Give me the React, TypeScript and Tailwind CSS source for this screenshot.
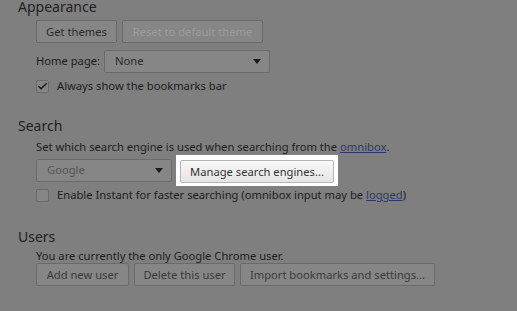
import { Check } from 'lucide-react';

const font = { fontFamily: '"Noto Sans", "Open Sans", sans-serif' };

function Btn({ children, disabled = false, className = '' }: { children: React.ReactNode; disabled?: boolean; className?: string }) {
  return (
    <button
      className={`h-[23px] px-[6px] whitespace-nowrap rounded-[2px] border border-[#6a6a6a] bg-[#868686] text-[11.2px] leading-none ${
        disabled ? 'text-[#9c9c9c]' : 'text-[#2b2b2b]'
      } ${className}`}
    >
      {children}
    </button>
  );
}

function Select({ value, className = '' }: { value: string; className?: string }) {
  return (
    <div
      className={`h-[23px] flex items-center justify-between pl-[10px] pr-[8px] rounded-[2px] border border-[#6a6a6a] bg-[#868686] text-[11.2px] text-[#2b2b2b] ${className}`}
    >
      <span>{value}</span>
      <span className="w-0 h-0 border-l-[4px] border-r-[4px] border-t-[5px] border-l-transparent border-r-transparent border-t-[#1c1c1c]" />
    </div>
  );
}

function Box({ checked = false }: { checked?: boolean }) {
  return (
    <span className="w-[13px] h-[13px] shrink-0 rounded-[2px] border border-[#6a6a6a] bg-[#868686] flex items-center justify-center">
      {checked && <Check size={11} strokeWidth={3.5} className="text-[#1c1c1c]" />}
    </span>
  );
}

export default function App() {
  return (
    <div style={font} className="w-[517px] h-[311px] overflow-hidden bg-[#7f7f7f] text-[#1d1d1d] pl-[18px]">
      {/* Appearance */}
      <h2 className="text-[14px] leading-[18px] -mt-[2px] text-[#222]">Appearance</h2>
      <div className="pl-[18px]">
        <div className="flex gap-[5px] mt-[4px]">
          <Btn className="w-[81px]">Get themes</Btn>
          <Btn disabled className="w-[141px]">Reset to default theme</Btn>
        </div>
        <div className="flex items-center gap-[4px] mt-[7px] text-[11.2px]">
          <span>Home page:</span>
          <Select value="None" className="w-[166px]" />
        </div>
        <label className="flex items-center gap-[8px] mt-[6px] text-[11.2px] leading-[14px]">
          <Box checked />
          <span>Always show the bookmarks bar</span>
        </label>
      </div>

      {/* Search */}
      <h2 className="text-[14px] leading-[18px] mt-[24px] text-[#222]">Search</h2>
      <div className="pl-[18px]">
        <p className="text-[11.2px] leading-[15px] mt-[4px]">
          Set which search engine is used when searching from the{' '}
          <span className="underline text-[#2c3a66]">omnibox</span>.
        </p>
        <div className="flex items-center mt-[5px]">
          <Select value="Google" className="w-[136px] text-[#555]" />
          <div className="ml-[4px] bg-white px-[4px] py-[3px] -my-[4px]">
            <button className="h-[23px] w-[154px] whitespace-nowrap rounded-[2px] border border-[#b5b5b5] bg-gradient-to-b from-[#f8f8f8] to-[#e4e4e4] text-[11.2px] leading-none text-[#333]">
              Manage search engines...
            </button>
          </div>
        </div>
        <label className="flex items-center gap-[8px] mt-[6px] text-[11.2px] leading-[14px]">
          <Box />
          <span className="whitespace-nowrap">
            Enable Instant for faster searching (omnibox input may be{' '}
            <span className="underline text-[#2c3a66]">logged</span>)
          </span>
        </label>
      </div>

      {/* Users */}
      <h2 className="text-[14px] leading-[18px] mt-[26px] text-[#222]">Users</h2>
      <div className="pl-[18px]">
        <p className="text-[11.2px] leading-[14px] mt-[3px]">You are currently the only Google Chrome user.</p>
        <div className="flex gap-[5px]">
          <Btn className="w-[93px] text-[#3a3a3a]">Add new user</Btn>
          <Btn className="w-[101px] text-[#3a3a3a]">Delete this user</Btn>
          <Btn className="w-[195px] text-[#3a3a3a]">Import bookmarks and settings...</Btn>
        </div>
      </div>
    </div>
  );
}
